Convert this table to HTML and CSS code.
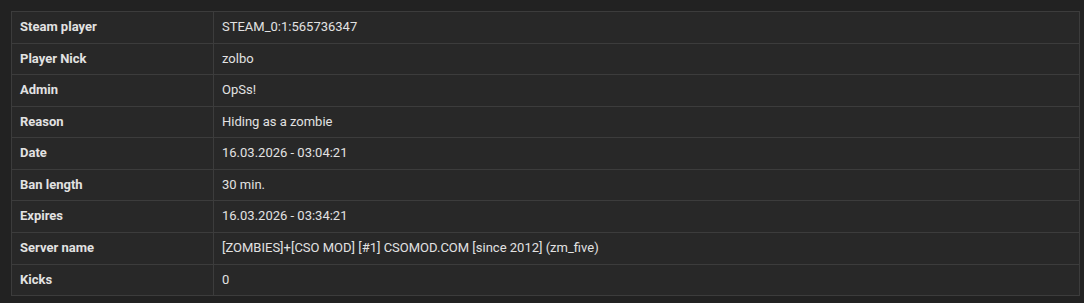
FILE: index.html
```html
<!DOCTYPE html>
<html>
<head>
<meta charset="utf-8">
<link rel="stylesheet" href="styles.css">
</head>
<body>
<div class="wrap">
<table class="info">
<tbody>
<tr><th>Steam player</th><td>STEAM_0:1:565736347</td></tr>
<tr><th>Player Nick</th><td>zolbo</td></tr>
<tr><th>Admin</th><td>OpSs!</td></tr>
<tr><th>Reason</th><td>Hiding as a zombie</td></tr>
<tr><th>Date</th><td>16.03.2026 - 03:04:21</td></tr>
<tr><th>Ban length</th><td>30 min.</td></tr>
<tr><th>Expires</th><td>16.03.2026 - 03:34:21</td></tr>
<tr><th>Server name</th><td>[ZOMBIES]+[CSO MOD] [#1] CSOMOD.COM [since 2012] (zm_five)</td></tr>
<tr><th>Kicks</th><td>0</td></tr>
</tbody>
</table>
</div>
</body>
</html>
```
FILE: styles.css
```css
html, body {
  margin: 0;
  padding: 0;
  background: #222222;
}
.wrap {
  padding: 11px 4px 0 11px;
}
.info {
  width: 1069px;
  border-collapse: collapse;
  background: #282828;
  font-family: Roboto, "Liberation Sans", sans-serif;
  font-size: 13px;
  line-height: 1.42857;
  color: #e2e2e2;
}
.info th, .info td {
  border: 1px solid #3c3c3c;
  padding: 6px 8px;
  text-align: left;
  vertical-align: top;
}
.info th {
  width: 185px;
  font-weight: bold;
}
.info td {
  font-weight: normal;
}
```
